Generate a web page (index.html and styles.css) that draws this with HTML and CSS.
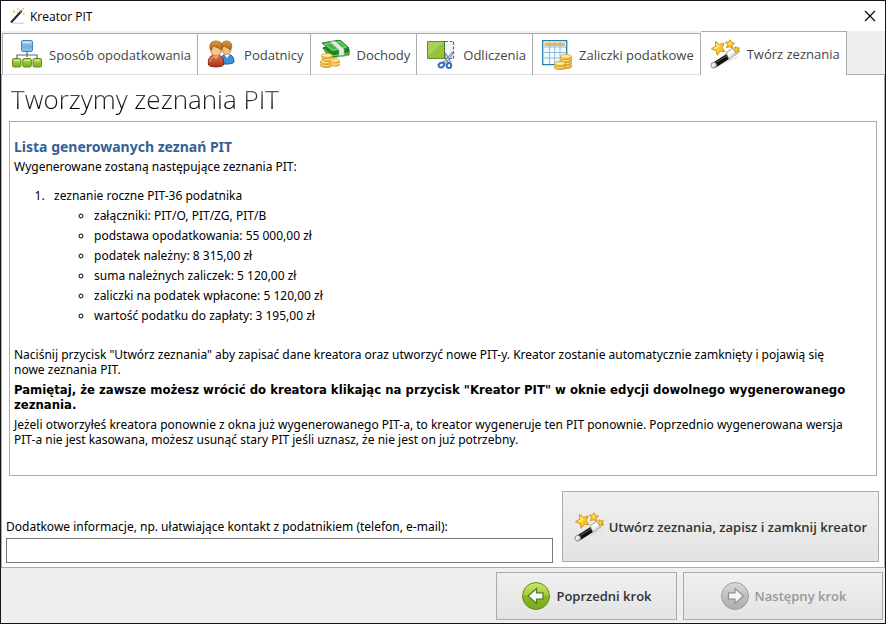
FILE: index.html
```html
<!DOCTYPE html>
<html lang="pl">
<head>
<meta charset="utf-8">
<title>Kreator PIT</title>
<link rel="stylesheet" href="styles.css">
</head>
<body>
<svg class="defs" aria-hidden="true">
  <defs>
    <linearGradient id="blue" x1="0" y1="0" x2="0" y2="1"><stop offset="0" stop-color="#b5daf3"/><stop offset=".5" stop-color="#6fb0e0"/><stop offset="1" stop-color="#8cc6ee"/></linearGradient>
    <linearGradient id="green" x1="0" y1="0" x2="0" y2="1"><stop offset="0" stop-color="#b9e04e"/><stop offset="1" stop-color="#79ad1c"/></linearGradient>
    <linearGradient id="gold" x1="0" y1="0" x2="1" y2="0"><stop offset="0" stop-color="#fff1a0"/><stop offset=".5" stop-color="#fbd350"/><stop offset="1" stop-color="#e49c18"/></linearGradient>
    <linearGradient id="star" x1="0" y1="0" x2="1" y2="1"><stop offset="0" stop-color="#ffe36b"/><stop offset="1" stop-color="#f2b705"/></linearGradient>
    <linearGradient id="silver" x1="0" y1="0" x2="1" y2="1"><stop offset="0" stop-color="#a9a9a9"/><stop offset=".4" stop-color="#ffffff"/><stop offset="1" stop-color="#909090"/></linearGradient>
    <linearGradient id="red" x1="0" y1="0" x2="0" y2="1"><stop offset="0" stop-color="#df7850"/><stop offset="1" stop-color="#a83219"/></linearGradient>
    <linearGradient id="hair" x1="0" y1="0" x2="0" y2="1"><stop offset="0" stop-color="#dc9a38"/><stop offset="1" stop-color="#a9651b"/></linearGradient>
    <linearGradient id="orbGreen" x1="0" y1="0" x2="0" y2="1"><stop offset="0" stop-color="#c9e672"/><stop offset=".45" stop-color="#a4d03c"/><stop offset=".5" stop-color="#86bb24"/><stop offset="1" stop-color="#79aa1c"/></linearGradient>
    <linearGradient id="orbGray" x1="0" y1="0" x2="0" y2="1"><stop offset="0" stop-color="#dadada"/><stop offset=".5" stop-color="#c0c0c0"/><stop offset="1" stop-color="#adadad"/></linearGradient>
    <symbol id="wand" viewBox="0 0 32 32">
      <path d="M4 30 30 19" stroke="#d5d5d5" stroke-width="2" opacity=".5"/>
      <path d="M5 27.500 20 18" stroke="#111" stroke-width="6"/>
      <path d="M6.500 25 19 17" stroke="#6b6b6b" stroke-width="1"/>
      <path d="m17 14.500 8-5q4-1 5.300 1.200 1.200 3-1 4.800l-9 6z" fill="url(#silver)" stroke="#999" stroke-width=".8"/>
      <path d="m19.500 15.500 8-4.800" stroke="#fff" stroke-width="2"/>
      <circle cx="4" cy="28" r="3" fill="url(#silver)" stroke="#888" stroke-width="1"/>
      <g fill="url(#star)" stroke="#cf910e" stroke-width="1" stroke-linejoin="round">
        <path d="m6 2.500 4 3.300 5-1.300-2 4.800 2.800 4.200-4.900-.4-3.200 4.200-1.300-5.200L1.500 10.500l4.500-3z"/>
        <path d="m21.500.8 1.200 3 3.500.7-2.600 2 .3 3.500-3-1.800-3.200 1 1-3.300-2.400-2.500 3.400-.2z"/>
        <path d="m27.500 8 1.500 1.700 2.300-.3-1 2.100 1 2.100-2.400-.4-1.600 1.700-.5-2.300-2-1.100 2.100-1.200z"/>
      </g>
      <path d="m6.800 5.500 2.800 3M5 10l3-1M21.500 3.500v2" stroke="#fff3a8" stroke-width="1.200" fill="none"/>
    </symbol>
    <symbol id="coin" viewBox="0 0 12 6">
      <path d="M.5 2.500v1.300C.5 6.200 11.500 6.200 11.500 3.800V2.500" fill="url(#gold)" stroke="#c98712" stroke-width=".7"/>
      <ellipse cx="6" cy="2.400" rx="5.500" ry="2" fill="#ffe98c" stroke="#d9971b" stroke-width=".7"/>
    </symbol>
  </defs>
</svg>

<div class="window">
  <header class="titlebar">
    <svg class="app-icon" viewBox="0 0 16 16" aria-hidden="true">
      <path d="M3 15.300h11" stroke="#d8d8d8" stroke-width="1.500"/>
      <path d="M1 14.500 11.500 3" stroke="#222" stroke-width="2"/>
      <path d="M10 4.600 12 2.500" stroke="#777" stroke-width="2.200"/>
      <path d="M3 2.500h2v2H3zM7 .5h1.500V2H7zM13 5h1.500v1.500H13zM12.500 0H14v1.500h-1.500zM7 4h1.500v1.500H7z" fill="#edb73c"/>
    </svg>
    <span class="app-name">Kreator PIT</span>
    <button class="close" type="button" aria-label="Zamknij">
      <svg viewBox="0 0 12 12" aria-hidden="true"><path d="m1 1 10 10M11 1 1 11" stroke="#000" stroke-width="1.100"/></svg>
    </button>
  </header>

  <nav class="tabs">
    <button class="tab" type="button">
      <svg class="icon" viewBox="0 0 30 30" aria-hidden="true">
        <path d="M15 12v5M5 18v-3h20v3" fill="none" stroke="#54678c" stroke-width="1.200"/>
        <rect x="9.500" y=".5" width="11" height="11" rx="1.500" fill="url(#blue)" stroke="#4684b8"/>
        <g fill="url(#green)" stroke="#5e8d12"><rect x=".5" y="18.500" width="8.500" height="8.500" rx="1.500"/><rect x="10.800" y="18.500" width="8.500" height="8.500" rx="1.500"/><rect x="21" y="18.500" width="8.500" height="8.500" rx="1.500"/></g>
        <path d="M11 2.500h8M2 20.500h5.500M12.300 20.500h5.500M22.500 20.500H28" stroke="#fff" stroke-opacity=".5"/>
      </svg>
      Sposób opodatkowania
    </button>
    <button class="tab" type="button">
      <svg class="icon" viewBox="0 0 30 30" aria-hidden="true">
        <path d="M14 23c0-7 2-9 6-9 4.500 0 7 3 7 8 0 2-11 3-13 1z" fill="#3f8fd2" stroke="#1d5b9c"/>
        <path d="m17 14 3 4 3-4" fill="#fff"/>
        <ellipse cx="19.500" cy="9" rx="4.500" ry="5.500" fill="#f7bd7c" stroke="#a7611b" stroke-width=".7"/>
        <path d="M14.500 8c-1-5 2-7 5-7 4 0 6 3 5 7L23 10c0-2-4-2-5.500-4z" fill="url(#hair)" stroke="#8a4a0e" stroke-width=".6"/>
        <path d="M1.500 25c-1-7 2-10 7.500-10 6 0 8.500 4 7.500 10-2 2.500-13 2.500-15 0z" fill="url(#red)" stroke="#86260f"/>
        <path d="M3 22c0-4 2-5 5-5" stroke="#eda080" fill="none"/>
        <path d="m5.500 15 3.500 4 3.500-4z" fill="#f4b16e"/>
        <ellipse cx="9" cy="10" rx="5.300" ry="6" fill="#f9c488" stroke="#a7611b" stroke-width=".7"/>
        <path d="M3 9C2 3 5 1 9 1c5 0 7 3 6 8l-1.500 1c0-2-5-2-7-4.500L4.500 10z" fill="url(#hair)" stroke="#8a4a0e" stroke-width=".6"/>
      </svg>
      Podatnicy
    </button>
    <button class="tab" type="button">
      <svg class="icon" viewBox="0 0 30 30" aria-hidden="true">
        <path d="m3 8 7 10 19-3V9L22 2z" fill="#178421" stroke="#11661b"/>
        <path d="m4 9 8 7 17-3M4 11l8 7 17-3" fill="none" stroke="#a4df92" stroke-width=".8"/>
        <path d="m2 3 18-3 9 8-17 4z" fill="#43b540" stroke="#188126"/>
        <path d="m4 4 16-2 6 5-13 3z" fill="none" stroke="#96e083" stroke-width=".8"/>
        <path d="m10 2 5-.8L24 9v6l-5 .8V10z" fill="#e5e9e5" stroke="#a9b8a9" stroke-width=".6"/>
        <use href="#coin" x="0" y="22" width="12" height="6"/><use href="#coin" x="0" y="19" width="12" height="6"/><use href="#coin" x="2" y="16" width="12" height="6"/><use href="#coin" x="1" y="13" width="12" height="6"/>
        <use href="#coin" x="10" y="21" width="10" height="6"/><use href="#coin" x="10" y="18" width="10" height="6"/>
      </svg>
      Dochody
    </button>
    <button class="tab" type="button">
      <svg class="icon" viewBox="0 0 30 30" aria-hidden="true">
        <path d="M1.500 1.500h17v17h-17z" fill="#95c43c" stroke="#5f9321"/>
        <path d="M2 2h16L2 16z" fill="#b3d767" opacity=".65"/>
        <path d="M19 1.500h8.500v17H19" fill="#eef4fd" stroke="#466fa5" stroke-width="1.200" stroke-dasharray="3 1.500"/>
        <path d="M18.500 1v18" stroke="#466030" stroke-dasharray="2 1.500"/>
        <path d="m26.500 12-1 4-8 9-1-2zM19.500 13l-.5 4 4 7 2-2z" fill="#c9d4e2" stroke="#64758c" stroke-width=".8"/>
        <ellipse cx="15.500" cy="25" rx="3" ry="2.200" transform="rotate(-25 15.500 25)" fill="none" stroke="#3672bc" stroke-width="2"/>
        <ellipse cx="23" cy="25.500" rx="2.200" ry="2.500" fill="none" stroke="#3672bc" stroke-width="2"/>
      </svg>
      Odliczenia
    </button>
    <button class="tab" type="button">
      <svg class="icon" viewBox="0 0 30 30" aria-hidden="true">
        <path d="M.7.7h24v24H.7z" fill="#f4faff" stroke="#2480b8" stroke-width="1.300"/>
        <path d="M2.500 2.500H23v3.500H2.500z" fill="#f5b844"/>
        <path d="M7.500 2v22M12.700 2v22M18 2v22M2 7h22M2 12.500h22M2 18h22" stroke="#8abce1" stroke-width="1"/>
        <use href="#coin" x="18" y="23" width="12" height="6"/><use href="#coin" x="18" y="20" width="12" height="6"/><use href="#coin" x="18" y="17" width="12" height="6"/><use href="#coin" x="18" y="14" width="12" height="6"/><use href="#coin" x="12" y="24" width="12" height="6"/><use href="#coin" x="12" y="21" width="12" height="6"/>
      </svg>
      Zaliczki podatkowe
    </button>
    <button class="tab active" type="button">
      <svg class="icon" aria-hidden="true"><use href="#wand"/></svg>
      Twórz zeznania
    </button>
  </nav>

  <main class="page">
    <h1>Tworzymy zeznania PIT</h1>
    <section class="summary">
      <h2>Lista generowanych zeznań PIT</h2>
      <p>Wygenerowane zostaną następujące zeznania PIT:</p>
      <ol>
        <li>zeznanie roczne PIT-36 podatnika
          <ul>
            <li>załączniki: PIT/O, PIT/ZG, PIT/B</li>
            <li>podstawa opodatkowania: 55 000,00 zł</li>
            <li>podatek należny: 8 315,00 zł</li>
            <li>suma należnych zaliczek: 5 120,00 zł</li>
            <li>zaliczki na podatek wpłacone: 5 120,00 zł</li>
            <li>wartość podatku do zapłaty: 3 195,00 zł</li>
          </ul>
        </li>
      </ol>
      <p>Naciśnij przycisk "Utwórz zeznania" aby zapisać dane kreatora oraz utworzyć nowe PIT-y. Kreator zostanie automatycznie zamknięty i pojawią się nowe zeznania PIT.</p>
      <p><strong>Pamiętaj, że zawsze możesz wrócić do kreatora klikając na przycisk "Kreator PIT" w oknie edycji dowolnego wygenerowanego zeznania.</strong></p>
      <p>Jeżeli otworzyłeś kreatora ponownie z okna już wygenerowanego PIT-a, to kreator wygeneruje ten PIT ponownie. Poprzednio wygenerowana wersja PIT-a nie jest kasowana, możesz usunąć stary PIT jeśli uznasz, że nie jest on już potrzebny.</p>
    </section>
    <div class="finish">
      <div class="field">
        <label for="info">Dodatkowe informacje, np. ułatwiające kontakt z podatnikiem (telefon, e-mail):</label>
        <input id="info" type="text">
      </div>
      <button class="btn create" type="button">
        <svg class="icon" aria-hidden="true"><use href="#wand"/></svg>
        Utwórz zeznania, zapisz i zamknij kreator
      </button>
    </div>
  </main>

  <footer class="steps">
    <button class="btn prev" type="button">
      <svg class="icon" viewBox="0 0 30 30" aria-hidden="true">
        <circle cx="15" cy="15" r="13.500" fill="url(#orbGreen)" stroke="#648e1b"/>
        <path d="M7 15 15.500 7.500v4.300H22v6.400h-6.500v4.300z" fill="#f6f8fa" stroke="#55781d" stroke-width="1.200"/>
      </svg>
      Poprzedni krok
    </button>
    <button class="btn next" type="button" disabled>
      <svg class="icon" viewBox="0 0 30 30" aria-hidden="true">
        <circle cx="15" cy="15" r="13.500" fill="url(#orbGray)" stroke="#a0a0a0"/>
        <path d="M23.500 15 15 7.500v4.300H8.500v6.400H15v4.300z" fill="#f5f5f5" stroke="#8e8e8e" stroke-width="1.200"/>
      </svg>
      Następny krok
    </button>
  </footer>
</div>
</body>
</html>
```
FILE: styles.css
```css
@counter-style spaced-decimal {
  system: extends decimal;
  suffix: ".\a0\a0\a0";
}

* {
  box-sizing: border-box;
}

body {
  margin: 0;
  color: #000;
  font: 12px/15px "Noto Sans", sans-serif;
}

button,
input {
  font: inherit;
  color: inherit;
}

h1,
h2,
p,
ol,
ul {
  margin: 0;
}

.defs {
  position: absolute;
  width: 0;
  height: 0;
}

.window {
  display: flex;
  flex-direction: column;
  min-height: 100vh;
  border: 1px solid #15151a;
  background: #efefef;
}

.titlebar {
  display: flex;
  align-items: center;
  height: 30px;
  padding: 0 9px;
  background: #fff;
  font-family: "Open Sans", sans-serif;
}

.app-icon {
  width: 16px;
  height: 16px;
  margin-right: 4px;
}

.close {
  display: flex;
  margin-left: auto;
  padding: 0;
  border: 0;
  background: none;
}

.close svg {
  width: 12px;
  height: 12px;
}

.tabs {
  display: flex;
  align-items: flex-end;
  height: 44px;
  padding-left: 1px;
  box-shadow: inset 0 -1px #ababab;
}

.tab {
  display: flex;
  align-items: center;
  gap: 7px;
  height: 42px;
  padding: 0 6px 0 9px;
  border: solid #ababab;
  border-width: 1px 1px 0 0;
  background: #fff;
  box-shadow: inset 0 -1px #e0e0e0;
  color: #444;
  font: 13px/18px "Open Sans", sans-serif;
  white-space: nowrap;
}

.tab:first-child {
  border-left-width: 1px;
}

.tab.active {
  height: 44px;
  box-shadow: none;
}

.icon {
  flex: none;
  width: 30px;
  height: 30px;
}

.page {
  display: flex;
  flex: 1;
  flex-direction: column;
  padding-bottom: 4px;
  border: solid #ababab;
  border-width: 0 1px 1px;
  background: #fff;
}

h1 {
  width: fit-content;
  padding: 7px 9px 5px;
  background: linear-gradient(#666 30%, #000 70%) text;
  color: transparent;
  font: 300 26px/34px "Open Sans", sans-serif;
}

.summary {
  flex: 1;
  margin: 0 7px;
  padding: 15px 20px 15px 4px;
  border: 1px solid #ababab;
}

h2 {
  margin-bottom: 2px;
  color: #336296;
  font: bold 14px/20px "Noto Sans", sans-serif;
}

.summary ol {
  margin: 12px 0 21px;
  padding-left: 40px;
  line-height: 20px;
  list-style: spaced-decimal;
}

.summary ul {
  padding-left: 40px;
  list-style: circle;
}

p + p {
  margin-top: 5px;
}

strong {
  display: block;
  font: bold 13px/15px "DejaVu Sans Condensed", "DejaVu Sans", sans-serif;
}

.finish {
  display: flex;
  align-items: flex-start;
  gap: 9px;
  margin: 15px 5px 0 4px;
}

.field {
  display: flex;
  flex: 1;
  flex-direction: column;
  justify-content: flex-end;
  gap: 4px;
  height: 72px;
}

.field input {
  width: 100%;
  height: 25px;
  padding: 0 4px;
  border: 1px solid #7a7a7a;
  background: #fff;
}

.btn {
  display: flex;
  align-items: center;
  justify-content: center;
  gap: 5px;
  height: 48px;
  border: 1px solid #ababab;
  background: linear-gradient(#f0f0f0, #e3e3e3);
  color: #333;
  font: 600 13px/18px "Open Sans", sans-serif;
  white-space: nowrap;
}

.create {
  height: 71px;
  padding: 0 11px;
}

.steps {
  display: flex;
  justify-content: flex-end;
  gap: 6px;
  padding: 4px 2px 3px;
}

.prev {
  width: 181px;
}

.next {
  width: 200px;
  color: #999;
}
```
